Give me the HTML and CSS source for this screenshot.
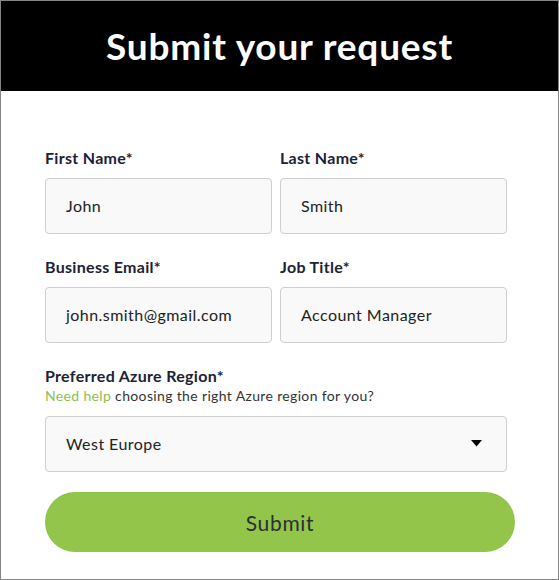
FILE: index.html
```html
<!DOCTYPE html>
<html>
<head>
<meta charset="utf-8">
<link rel="stylesheet" href="styles.css">
</head>
<body>
<div class="card">
  <header class="head"><h1 class="title">Submit your request</h1></header>
  <form class="form">
    <div class="row">
      <div class="field">
        <label class="label">First Name*</label>
        <div class="input">John</div>
      </div>
      <div class="field">
        <label class="label">Last Name*</label>
        <div class="input">Smith</div>
      </div>
    </div>
    <div class="row">
      <div class="field">
        <label class="label">Business Email*</label>
        <div class="input">john.smith@gmail.com</div>
      </div>
      <div class="field">
        <label class="label">Job Title*</label>
        <div class="input">Account Manager</div>
      </div>
    </div>
    <div class="field wide">
      <label class="label">Preferred Azure Region*</label>
      <div class="help"><span class="link">Need help</span> choosing the right Azure region for you?</div>
      <div class="input select">West Europe
        <svg class="caret" width="11" height="7" viewBox="0 0 11 7"><path d="M0 0H11L5.5 6.5Z" fill="#000"/></svg>
      </div>
    </div>
    <div class="btn">Submit</div>
  </form>
</div>
</body>
</html>
```
FILE: styles.css
```css
html, body { margin: 0; padding: 0; background: #fff; }
body { font-family: Lato, "Open Sans", sans-serif; }
.card {
  width: 559px; height: 580px; box-sizing: border-box;
  border: 1px solid #858585; background: #fff;
}
.head {
  height: 90px; background: #000;
  display: flex; align-items: center; justify-content: center;
}
.title {
  margin: 0; color: #fff; font-size: 37px; font-weight: 700;
  letter-spacing: 0.8px; padding-bottom: 2px;
}
.form { padding: 58px 0 0 44px; width: 470px; }
.row { display: flex; gap: 8px; margin-bottom: 24px; }
.field { display: flex; flex-direction: column; width: 227px; }
.field.wide { width: 462px; }
.label {
  font-size: 16px; font-weight: 700; color: #1b2236;
  line-height: 18px; margin-bottom: 11px; letter-spacing: 0.3px;
}
.wide .label { margin-bottom: 2px; }
.help { font-size: 14px; color: #333; line-height: 18px; margin-bottom: 11px; letter-spacing: 0.35px; }
.link { color: #8cc04e; }
.input {
  height: 56px; box-sizing: border-box;
  border: 1px solid #cfcfcf; border-radius: 4px; background: #f9f9f9;
  padding: 0 0 0 20px; display: flex; align-items: center;
  font-size: 16px; color: #222; padding-bottom: 1px; letter-spacing: 0.45px;
}
.select { justify-content: space-between; padding-right: 24px; }
.caret { display: block; }
.btn {
  margin-top: 20px; width: 470px; height: 60px; border-radius: 30px;
  background: #92c54a; color: #2b2f3a; font-size: 21px;
  display: flex; align-items: center; justify-content: center;
  letter-spacing: 0.7px;
}
```
